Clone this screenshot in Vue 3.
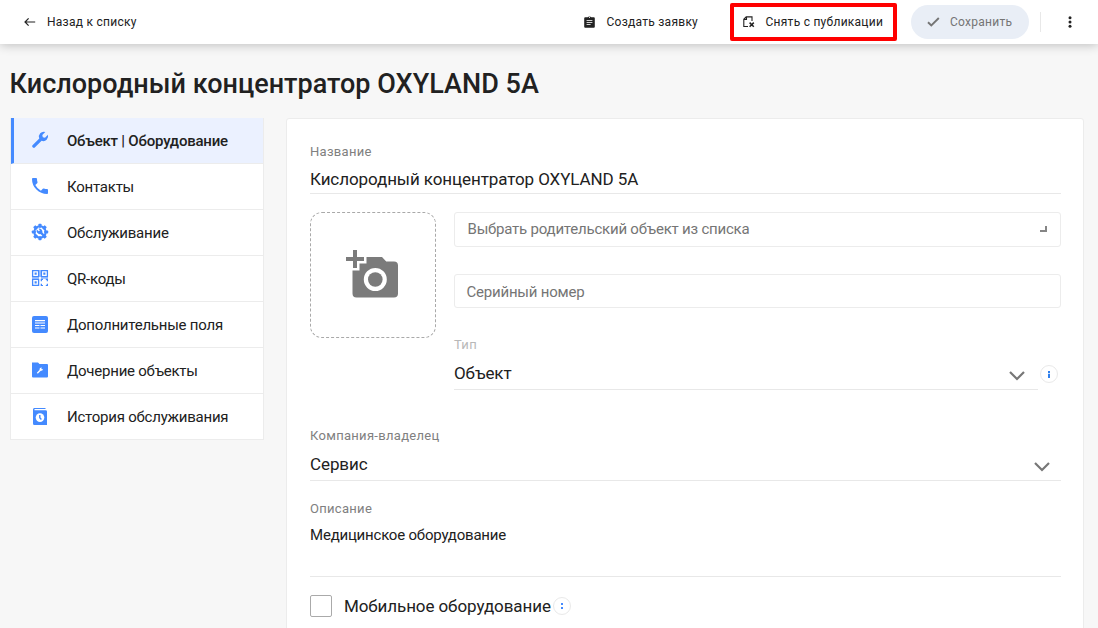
<script setup>
const menu = [
  { id: 'wrench', label: 'Объект | Оборудование', active: true },
  { id: 'phone', label: 'Контакты' },
  { id: 'gear', label: 'Обслуживание' },
  { id: 'qr', label: 'QR-коды' },
  { id: 'list', label: 'Дополнительные поля' },
  { id: 'folder', label: 'Дочерние объекты' },
  { id: 'history', label: 'История обслуживания' },
]
const gearTeeth = [0, 45, 90, 135, 180, 225, 270, 315]
</script>

<template>
  <div class="page">
    <header class="topbar">
      <a class="back">
        <svg width="12" height="10" viewBox="0 0 12 10" fill="none" stroke="#222" stroke-width="1.2"><path d="M11.2 5H1.2M4.6 1.4L1 5l3.6 3.6" /></svg>
        <span>Назад к списку</span>
      </a>
      <a class="create">
        <svg width="11" height="12" viewBox="0 0 11 12"><path fill="#222" d="M1.2 1.2H3.7A1.9 1.2 0 0 1 7.3 1.2H9.8Q10.8 1.2 10.8 2.2V10.8Q10.8 11.8 9.8 11.8H1.2Q.2 11.8 .2 10.8V2.2Q.2 1.2 1.2 1.2Z" /><path stroke="#fff" stroke-width=".8" d="M2.6 4.5H8.4M2.6 6.5H8.4M2.6 8.5H6.6" /><circle cx="5.5" cy="1.5" r=".6" fill="#fff" /></svg>
        <span>Создать заявку</span>
      </a>
      <a class="unpublish">
        <svg width="12" height="12" viewBox="0 0 12 12" fill="none" stroke="#222" stroke-width="1.1"><path d="M5 10.5H.8V3.2L3.2 .9H9V5M3.5 1V3.4H1" /><path stroke-width="1.5" d="M6.6 6.6l4.2 4.2M10.8 6.6L6.6 10.8" /></svg>
        <span>Снять с публикации</span>
      </a>
      <a class="save">
        <svg width="13" height="10" viewBox="0 0 13 10" fill="none" stroke="#757575" stroke-width="1.9"><path d="M1 5.2L4.3 8.4 11.8 1" /></svg>
        <span>Сохранить</span>
      </a>
      <i class="divider"></i>
      <svg class="dots" width="4" height="12" viewBox="0 0 4 12" fill="#222"><circle cx="2" cy="1.8" r="1.5" /><circle cx="2" cy="6" r="1.5" /><circle cx="2" cy="10.2" r="1.5" /></svg>
    </header>

    <h1>Кислородный концентратор OXYLAND 5A</h1>

    <div class="columns">
      <nav class="menu">
        <a v-for="item in menu" :key="item.id" class="item" :class="{ active: item.active }">
          <svg width="18" height="18" viewBox="0 0 18 18" fill="#448aff">
            <template v-if="item.id === 'wrench'">
              <path d="M1.5 14.2L8.3 7.5A4.8 4.8 0 0 1 14.3 1.1L11.3 4.1 11.8 6.3 14 6.8 16.9 3.8A4.8 4.8 0 0 1 10.6 9.8L3.8 16.6Q2.9 17.3 2 16.5L1.4 15.9Q.8 15 1.5 14.2Z" />
            </template>
            <template v-else-if="item.id === 'phone'">
              <path d="M1.9 1H5.1Q6 1 6 1.9 6 3.6 6.5 5.1 6.7 5.7 6.2 6.2L4.3 8.1A13 13 0 0 0 9.9 13.7L11.8 11.8Q12.3 11.3 12.9 11.5 14.5 12 16.1 12 17 12 17 12.9V16.1Q17 17 16.1 17A15.1 15.1 0 0 1 1 1.9Q1 1 1.9 1Z" />
            </template>
            <template v-else-if="item.id === 'gear'">
              <rect v-for="a in gearTeeth" :key="a" x="7.4" y=".8" width="3.2" height="4" rx=".8" :transform="`rotate(${a} 9 9)`" />
              <circle cx="9" cy="9" r="5.7" fill="none" stroke="#448aff" stroke-width="2" />
              <path d="M5.8 6.4L7.8 8.2 8.9 7.4 7.5 5.5A3.4 3.4 0 0 1 11.4 9.5L13.3 11.5 11.7 13.1 9.5 11.1A3.4 3.4 0 0 1 5.8 6.4Z" />
            </template>
            <template v-else-if="item.id === 'qr'">
              <path fill="#a9c9ff" d="M8 1H10V8H8ZM1 8H8V10H1ZM10 8H17V10H10Z" />
              <g fill="none" stroke="#448aff" stroke-width="1.3"><path d="M1.6 1.6H7.6V7.6H1.6ZM10.4 1.6H16.4V7.6H10.4ZM1.6 10.4H7.6V16.4H1.6Z" /></g>
              <path d="M3.6 3.6H5.7V5.7H3.6ZM12.3 3.6H14.4V5.7H12.3ZM3.6 12.3H5.7V14.4H3.6ZM9.7 9.8H12V11H11V12.2H9.7ZM14.8 9.8H17V12.2H15.7V11H14.8ZM9.7 14.8H11V16H12V17H9.7ZM15.7 14.8H17V17H14.8V16H15.7Z" />
            </template>
            <template v-else-if="item.id === 'list'">
              <rect x="1" y="1" width="16" height="17" rx="2" />
              <path stroke="#fff" stroke-width="1.1" d="M4 5.6H14M4 8H14M4 10.5H8.5M9.5 10.5H14M4 13H8.5M9.5 13H14" />
            </template>
            <template v-else-if="item.id === 'folder'">
              <path d="M1 1.5H7L8.5 3H16Q17 3 17 4V15.5Q17 16.5 16 16.5H2Q1 16.5 1 15.5Z" />
              <path stroke="#fff" stroke-width="1.4" d="M6.3 12.2L10 8.5" /><path fill="#fff" d="M8.6 8.8Q8.3 6.6 11 6.5L10.3 7.6 11.1 8.4 12.2 7.7Q12 10.1 9.8 9.8Z" />
            </template>
            <template v-else>
              <path d="M3.2 1H14.5V2H3.5V3.2H14.5Q16 3.2 16 4.5V18H3.2Q2 18 2 16.5V2.5Q2 1 3.2 1Z" /><circle cx="9" cy="10.6" r="4.3" fill="#fff" /><path fill="none" stroke="#448aff" stroke-width="1.4" d="M8.8 8V10.8L10.4 12.5" />
            </template>
          </svg>
          <span>{{ item.label }}</span>
        </a>
      </nav>

      <main class="card">
        <label class="name-label">Название</label>
        <div class="name-value">Кислородный концентратор OXYLAND 5A</div>
        <div class="media">
          <div class="photo">
            <svg width="52" height="48" viewBox="0 0 52 48" fill="#7b7b7b">
              <path d="M7 0H11V7H18V11H11V18H7V11H0V7H7Z" />
              <path fill-rule="evenodd" d="M20.5 7H36L40.2 11.5H48Q52 11.5 52 15.5V43.5Q52 47.5 48 47.5H10.5Q6.5 47.5 6.5 43.5V20.5H13.5V13.5H20.5ZM29.3 18A11.5 11.5 0 1 0 29.3 41 11.5 11.5 0 1 0 29.3 18Z" />
              <circle cx="29.3" cy="29.5" r="7.3" />
            </svg>
          </div>
          <div class="fields">
            <div class="box parent"><span>Выбрать родительский объект из списка</span><i class="corner"></i></div>
            <div class="box serial"><span>Серийный номер</span></div>
            <label class="type-label">Тип</label>
            <div class="type-row">
              <div class="select type">
                <span>Объект</span>
                <svg width="18" height="12" viewBox="0 0 18 12"><path d="M2 2l7 7 7-7" /></svg>
              </div>
              <b class="info"><i></i></b>
            </div>
          </div>
        </div>
        <label class="owner-label">Компания-владелец</label>
        <div class="select owner">
          <span>Сервис</span>
          <svg width="18" height="12" viewBox="0 0 18 12"><path d="M2 2l7 7 7-7" /></svg>
        </div>
        <label class="desc-label">Описание</label>
        <div class="desc">Медицинское оборудование</div>
        <div class="mobile">
          <i class="checkbox"></i>
          <span>Мобильное оборудование</span>
          <b class="info"><i></i></b>
        </div>
      </main>
    </div>
  </div>
</template>

<style>
body { background: #f7f7f7; overflow: hidden; }
</style>

<style scoped>
* { box-sizing: border-box; }
.page { height: 628px; overflow: hidden; background: #f7f7f7; font-family: Roboto, "Liberation Sans", sans-serif; color: #212121; }
svg { display: block; flex: none; }
span { white-space: nowrap; }
.topbar { height: 44px; background: #fff; display: flex; align-items: center; padding-left: 24px; box-shadow: 0 1px 10px rgba(0,0,0,.24); font-size: 12px; line-height: 16px; letter-spacing: .26px; }
.topbar a { display: flex; align-items: center; }
.back { gap: 11px; width: 560px; }
.create { gap: 11.5px; width: 146px; }
.unpublish { border: 4px solid #f00; height: 38px; width: 167px; padding-left: 9px; gap: 10.5px; border-radius: 2px; }
.save { margin-left: 14px; width: 118px; height: 34px; border-radius: 17px; background: #e9eef6; color: #757575; padding-left: 15.5px; gap: 10.5px; }
.divider { width: 1px; height: 20px; background: #e8e8e8; margin-left: 11px; }
.dots { margin-left: 26.5px; }
h1 { margin: 22px 0 0 9.5px; height: 52px; font-size: 27px; line-height: 36px; font-weight: 500; letter-spacing: .02px; white-space: nowrap; }
.columns { display: flex; align-items: flex-start; padding-left: 10px; gap: 22px; }
.menu { width: 254px; border: 1px solid #ececec; border-top: 0; background: #fff; }
.item { height: 46px; display: flex; align-items: center; border-bottom: 1px solid #ececec; padding-left: 20px; gap: 18px; font-size: 15px; letter-spacing: -.23px; }
.item svg { margin-top: -1px; }
.item:last-child { height: 45px; border-bottom: 0; }
.item.active { background: #ebf1ff; border-left: 3px solid #448aff; padding-left: 17px; font-weight: 500; letter-spacing: -.22px; }
.card { width: 798px; height: 530px; border: 1px solid #ececec; border-radius: 3px; background: #fff; padding: 24px 22px 0 23px; display: flex; flex-direction: column; }
label { display: block; font-size: 13px; line-height: 18px; letter-spacing: .3px; color: #808080; }
.name-value { height: 33px; padding-top: 7px; line-height: 22px; font-size: 17px; letter-spacing: -.09px; border-bottom: 1px solid #e8e8e8; }
.media { display: flex; margin-top: 18px; height: 215px; gap: 18px; }
.photo { width: 126px; height: 126px; border: 1px dashed #a9a9a9; border-radius: 12px; padding: 37px 0 0 35px; }
.fields { flex: 1; }
.box { border: 1px solid #ececec; border-radius: 3px; color: #757575; font-size: 15px; letter-spacing: -.21px; display: flex; align-items: center; justify-content: space-between; }
.parent { height: 35px; padding: 0 13px 2px 12.5px; }
.corner { width: 7px; height: 6px; border-right: 2px solid #858585; border-bottom: 2px solid #858585; }
.serial { height: 34px; margin-top: 27px; padding: 2px 0 0 11.5px; }
.type-label { margin-top: 28px; color: #b8b8b8; }
.type-row { display: flex; }
.select { display: flex; justify-content: space-between; border-bottom: 1px solid #e8e8e8; font-size: 17px; line-height: 22px; letter-spacing: -.09px; }
.select svg { fill: none; stroke: #777; stroke-width: 2.2; }
.type { width: 584px; height: 36px; padding: 8px 12px 0 0; }
.type svg, .owner svg { margin-top: 8px; }
.info { width: 18px; height: 18px; border: 1px solid #e9e9e9; border-radius: 50%; display: grid; place-items: center; }
.info i { width: 2px; height: 7px; background: linear-gradient(#2f80ed 0 2px, #c4dcff 2px 3px, #2f80ed 3px 7px); }
.type-row .info { margin: 11px 0 0 2px; }
.owner { height: 36px; padding: 8px 10px 0 0; }
.desc-label { margin-top: 19px; }
.desc { height: 59px; padding-top: 7px; line-height: 20px; font-size: 15px; letter-spacing: -.21px; border-bottom: 1px solid #e8e8e8; }
.mobile { display: flex; align-items: center; height: 22px; margin-top: 18px; font-size: 17px; line-height: 22px; letter-spacing: -.09px; }
.checkbox { width: 22px; height: 22px; border: 1px solid #aaa; border-radius: 2px; margin-right: 12px; }
.mobile .info { margin-left: 2px; }
.mobile .info i { height: 6px; background: linear-gradient(#448aff 0 2px, #fff 2px 4px, #448aff 4px 6px); }
</style>
